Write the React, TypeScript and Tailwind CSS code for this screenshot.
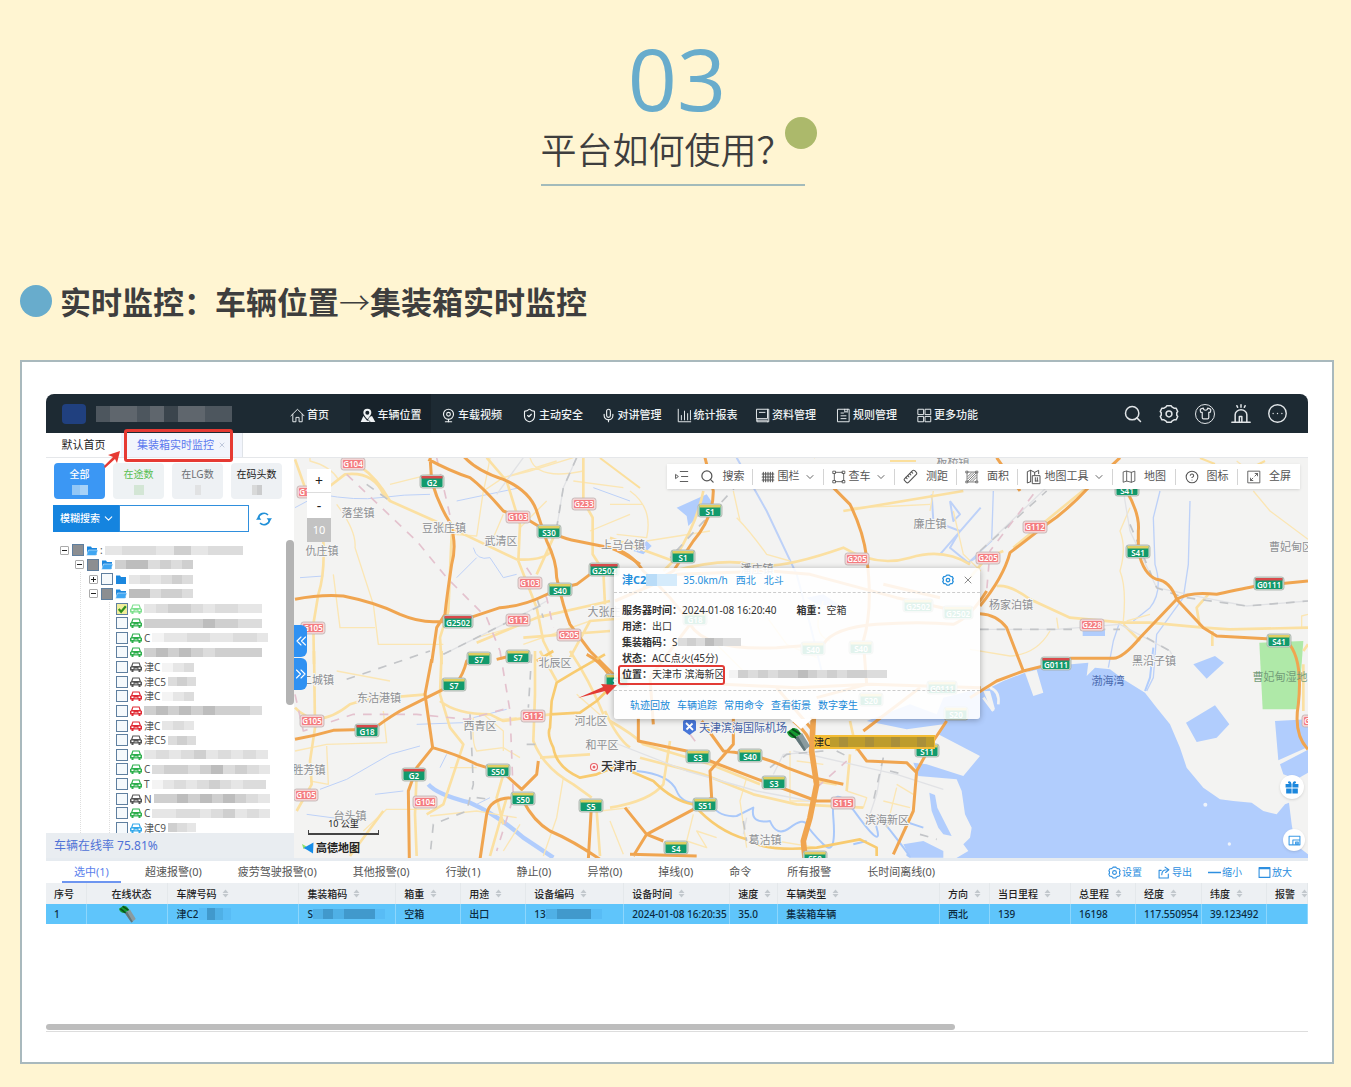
import React from "react";
import {
  ChevronDown,
  CircleEllipsis,
  CircleHelp,
  Mic,
  Ruler,
  Search,
  ShieldCheck,
  Shirt,
  Webcam,
  X,
} from "lucide-react";

const FONT = "font-['Noto_Sans','Noto_Sans_CJK_SC',sans-serif]";
const CJK = "font-['Noto_Sans_CJK_SC',sans-serif]";

/* ---------- icons ---------- */

function Icon({ d, size = 15, sw = 1.5, fill = "none" }: { d: string; size?: number; sw?: number; fill?: string }) {
  return (
    <svg width={size} height={size} viewBox="0 0 24 24" fill={fill} stroke="currentColor" strokeWidth={sw} strokeLinecap="round" strokeLinejoin="round" className="shrink-0">
      <path d={d} />
    </svg>
  );
}

const P = {
  home: "M1.5 12.5L12 2l10.500 10.500M4.500 10v12h5v-7h5v7h5V10",
  stats: "M2 2v20h20M7 12v7M12 5v14M17 9v10M21.500 4v15",
  book: "M3 2h17v15H3zM3 17v5h17M20 2h2v20h-2M7 7h9M3 19.500h17",
  rules: "M3 2h18v20H3zM8 8h4M8 12.500h8M8 17h8M14 2v5l2-1.500L18 7V2",
  more: "M2 2h8.500v8.500H2zM13.500 2H22v8.500h-8.500zM2 13.500h8.500V22H2zM13.500 13.500H22V22h-8.500z",
  gear: "M8.500 3.500l1-1.500h5l1 1.500 2.500 1.500h2.500l2 4-1.200 1.500v3L22.500 15l-2 4H18l-2.500 1.500-1 1.500h-5l-1-1.500L6 19H3.500l-2-4 1.200-1.500v-3L1.500 9l2-4H6zM12 8.500a3.500 3.500 0 1 0 0 7 3.500 3.500 0 0 0 0-7z",
  siren: "M1 22h22M5 22v-9a7 6 0 0 1 14 0V22M10 22v-7h3v7M12 1v3M7 2l1 2M17 2l-1 2",
  list: "M10 4h12M12 12h10M10 20h12M3 9l4 3-4 3z",
  grid: "M2 7h20M2 12h20M2 17h20M4 4v16M8 4v16M12 4v16M16 4v16M20 4v16",
  frame: "M2 2h4v4H2zM18 2h4v4h-4zM2 18h4v4H2zM18 18h4v4h-4zM6 4h12M6 20h12M4 6v12M20 6v12",
  area: "M2 2h3v3H2zM19 2h3v3h-3zM2 19h3v3H2zM19 19h3v3h-3zM5 3.500h14M5 20.500h14M3.500 5v14M20.500 5v14M5 11l6-6M5 15L15 5M5 19L19 5M9 19L19 9M13 19l6-6",
  tools: "M7 19l-5 2V4l5-2 6 3 6-3v5M7 2v17M13 5v4M10 10h11v12H10zM14 13v5M17 13v5M14 18h4",
  fold: "M2 4v17l6-2 8 2 6-2V2l-6 2-8-2zM8 2v17M16 4v17",
  full: "M2 2h20v20H2zM14 6h4v4M18 6l-4.500 4.500M6 14v4h4M6 18l4-4",
  export: "M6 8H2v14h17v-7M7 16c0-6 4-9 10-9M13 2l7 5-6 5",
  square: "M2 3h20v18H2zM2 5h20",
};

function PersonPin() {
  return (
    <svg width="16" height="16" viewBox="0 0 24 24" fill="currentColor" className="shrink-0">
      <path d="M11 1a6 6 0 0 1 6 6c0 3-3 6-6 10C8 13 5 10 5 7a6 6 0 0 1 6-6zm0 3a3 3 0 1 0 0 6 3 3 0 0 0 0-6z" fillRule="evenodd" />
      <path d="M5 12l-4 9h14l-3-3-1 1.500z" />
      <path d="M15 13l3-1 5 9h-7l-4-4z" />
    </svg>
  );
}

function GiftBox() {
  return (
    <svg width="14" height="14" viewBox="0 0 24 24" fill="#1b87dd">
      <path d="M1 7h10.300v6H1zM12.700 7H23v6H12.700zM2 14.500h9.300V23H2zM12.700 14.500H22V23h-9.300z" />
      <path d="M11 7C4 7 4 2 7 2s4 3 4 5zM13 7c7 0 7-5 4-5s-4 3-4 5z" />
    </svg>
  );
}

function Folder({ open }: { open: boolean }) {
  return (
    <svg width="12" height="11" viewBox="0 0 24 22" className="shrink-0">
      <path d="M2 3h8l2 3h10v14H2z" fill="#1b87de" />
      {open && <path d="M5 10h19l-4 11H1z" fill="#3fa6f2" stroke="#fff" strokeWidth="1" />}
    </svg>
  );
}

function Car({ color }: { color: string }) {
  return (
    <svg width="12" height="10" viewBox="0 0 24 20" className="shrink-0">
      <path fillRule="evenodd" d="M5 1h14l3 8 2 1v7h-3v3h-4v-3H7v3H3v-3H0v-7l2-1zm1.500 2L5 8h14l-1.500-5zM3 11v3h4v-3zm14 0v3h4v-3zM9 13h6v1.500H9z" fill={color} />
    </svg>
  );
}

function Truck({ width = 24, height = 26 }: { width?: number; height?: number }) {
  return (
    <svg width={width} height={height} viewBox="0 0 24 26">
      <path d="M9 11l7-5 8 13-6 5z" fill="#8a9b9f" />
      <path d="M9 11l3-2 8 14-2 1z" fill="#61767a" />
      <path d="M1 5l6-4c4 0 6 2 8 6l-7 4C5 11 2 9 1 5z" fill="#159a31" />
      <path d="M3 5l7 6M6 2l8 5" stroke="#0b4a1c" strokeWidth="2" />
    </svg>
  );
}

function Sorter() {
  return (
    <svg width="7" height="9" viewBox="0 0 14 18" className="shrink-0" fill="#c2c8cd">
      <path d="M7 1l6 7H1zM7 17l6-7H1z" />
    </svg>
  );
}

/* Obscured text shown as a run of grey blocks */
function Mosaic({ tones, className = "" }: { tones: string; className?: string }) {
  return (
    <span aria-hidden className={`flex overflow-hidden ${className}`}>
      {tones.split("").map((t, i) => (
        <span key={i} className={`h-full flex-1 ${TONE[t]}`} />
      ))}
    </span>
  );
}
const TONE: Record<string, string> = {
  "0": "bg-[#f4f4f4]",
  "1": "bg-[#e6e6e6]",
  "2": "bg-[#dcdcdc]",
  "3": "bg-[#cfcfcf]",
  "4": "bg-[#bdbdbd]",
  a: "bg-[#4d565e]",
  b: "bg-[#5f666d]",
  c: "bg-[#3b454d]",
  p: "bg-[#4fb0e6]",
  q: "bg-[#4199cc]",
  r: "bg-[#58bcf5]",
  s: "bg-[#b9dcf8]",
  t: "bg-[#d5ebfb]",
  g: "bg-[#c8e2c8]",
  y: "bg-[#bd9c2c]",
  z: "bg-[#a98f3a]",
};

/* ---------- top navigation ---------- */

const NAV: { label: string; icon: React.ReactNode; width: string; active?: boolean }[] = [
  { label: "首页", icon: <Icon d={P.home} />, width: "w-[81px]" },
  { label: "车辆位置", icon: <PersonPin />, width: "w-[81px]", active: true },
  { label: "车载视频", icon: <Webcam size={15} strokeWidth={1.800} />, width: "w-[81px]" },
  { label: "主动安全", icon: <ShieldCheck size={15} strokeWidth={1.800} />, width: "w-[81px]" },
  { label: "对讲管理", icon: <Mic size={15} strokeWidth={1.800} />, width: "w-[76px]" },
  { label: "统计报表", icon: <Icon d={P.stats} />, width: "w-[76px]" },
  { label: "资料管理", icon: <Icon d={P.book} />, width: "w-[81px]" },
  { label: "规则管理", icon: <Icon d={P.rules} />, width: "w-[81px]" },
  { label: "更多功能", icon: <Icon d={P.more} />, width: "w-[81px]" },
];

function TopBar() {
  return (
    <header className="flex h-[39px] items-stretch rounded-t-lg bg-[#1d2a33] text-[#eef2f4]">
      <div className="flex w-[223px] items-center pl-4">
        <span className="mr-2.5 h-5 w-6 rounded-sm bg-[#20407f]" />
        <Mosaic tones="abbabcbbaa" className="h-4 w-[136px]" />
      </div>
      <nav className="flex">
        {NAV.map((n) => (
          <a key={n.label} href="#" className={`flex items-center justify-center gap-0.5 pt-1 text-[11px] font-medium whitespace-nowrap ${n.width} ${n.active ? "bg-[#17222a]" : ""}`}>
            {n.icon}
            {n.label}
          </a>
        ))}
      </nav>
      <div className="mr-5 ml-auto flex items-center gap-4 text-[#e1e5e8]">
        <button aria-label="搜索"><Search size={20} strokeWidth={1.800} /></button>
        <button aria-label="设置"><Icon d={P.gear} size={20} sw={1.800} /></button>
        <button aria-label="皮肤" className="flex size-5 items-center justify-center rounded-full border border-current"><Shirt size={13} strokeWidth={2.200} /></button>
        <button aria-label="报警"><Icon d={P.siren} size={20} sw={1.800} /></button>
        <button aria-label="更多"><CircleEllipsis size={21} strokeWidth={1.600} /></button>
      </div>
    </header>
  );
}

function PageTabs() {
  return (
    <div className="relative flex h-6 bg-white text-[11px] text-[#222]">
      <button className="w-[75px]">默认首页</button>
      <button className="flex w-[122px] items-center justify-center gap-1 border-r border-[#dfe3e8] bg-[#f2f5fc] text-[#5b79ee]">
        集装箱实时监控
        <X size={8} className="text-[#a8b4cc]" />
      </button>
      <span className="absolute -top-1 left-[78px] z-20 h-[33px] w-[109px] rounded-[3px] border-[3px] border-[#e63a33]" />
      <svg className="absolute top-[17px] left-[57px] z-20" width="19" height="19" viewBox="0 0 19 19" fill="#e63a33">
        <path d="M1 16l9-9-5-2 12-4-3 12-2-4-10 9z" />
      </svg>
    </div>
  );
}

/* ---------- sidebar ---------- */

const CARDS = [
  { label: "全部", cls: "bg-[#3b97f4] text-white font-medium", tones: "st", w: "w-4" },
  { label: "在途数", cls: "bg-[#eef2f4] text-[#58bf52]", tones: "g", w: "w-2.5" },
  { label: "在LG数", cls: "bg-[#eef1f4] text-[#6b6f73]", tones: "2", w: "w-1.5" },
  { label: "在码头数", cls: "bg-[#eef1f4] text-[#222]", tones: "34", w: "w-2.5" },
];

type Row = { level: number; open?: boolean; state?: "part" | "on"; car?: string; text?: string; tones: string; w: string };
const GREEN = "#2daf4c";
const GREY = "#555";
const RED = "#e02b35";
const TREE: Row[] = [
  { level: 0, open: true, state: "part", text: ":", tones: "12213122", w: "w-[138px]" },
  { level: 1, open: true, state: "part", text: "", tones: "3442323", w: "w-[78px]" },
  { level: 2, open: false, text: "", tones: "121232", w: "w-[64px]" },
  { level: 2, open: true, state: "part", text: "", tones: "442332", w: "w-[64px]" },
  { level: 3, state: "on", car: "#7fe08f", tones: "1233212211", w: "w-[118px]" },
  { level: 3, car: GREEN, tones: "3333343322", w: "w-[118px]" },
  { level: 3, car: GREEN, text: "C", tones: "0112211221", w: "w-[116px]" },
  { level: 3, car: GREEN, tones: "3434323333", w: "w-[118px]" },
  { level: 3, car: GREY, text: "津C", tones: "012", w: "w-[32px]" },
  { level: 3, car: GREY, text: "津C5", tones: "232", w: "w-[28px]" },
  { level: 3, car: RED, text: "津C", tones: "012", w: "w-[32px]" },
  { level: 3, car: RED, tones: "3434343332", w: "w-[118px]" },
  { level: 3, car: RED, text: "津C", tones: "121", w: "w-[32px]" },
  { level: 3, car: GREY, text: "津C5", tones: "232", w: "w-[28px]" },
  { level: 3, car: GREEN, tones: "1212312121", w: "w-[124px]" },
  { level: 3, car: GREEN, text: "C", tones: "2332342321", w: "w-[118px]" },
  { level: 3, car: GREEN, text: "T", tones: "0121232122", w: "w-[114px]" },
  { level: 3, car: GREY, text: "N", tones: "3343434321", w: "w-[116px]" },
  { level: 3, car: GREEN, text: "C", tones: "1122123121", w: "w-[118px]" },
  { level: 3, car: "#35a9ea", text: "津C9", tones: "321", w: "w-[28px]" },
];
const INDENT = ["pl-[14px]", "pl-[29px]", "pl-[43px]", "pl-[70px]"];

function TreeRow({ row }: { row: Row }) {
  return (
    <li className={`flex h-3.5 items-center gap-0.5 text-[10px] leading-3.5 text-[#555] ${INDENT[row.level]}`}>
      {row.level < 3 && (
        <button aria-label={row.open ? "收起" : "展开"} className="mr-px flex size-[9px] items-center justify-center rounded-[1px] border border-[#aaa] bg-white">
          <svg width="5" height="5" viewBox="0 0 5 5" stroke="#222" strokeWidth="1"><path d={row.open ? "M0 2.500h5" : "M0 2.500h5M2.500 0v5"} /></svg>
        </button>
      )}
      <span className="relative flex size-3 shrink-0">
        <input
          type="checkbox"
          aria-label={row.text || "车辆"}
          defaultChecked={row.state === "on"}
          className={`size-3 appearance-none border border-[#5f7f9f] ${row.state === "part" ? "bg-[#8c8e91]" : row.state === "on" ? "bg-[#f1ee9b]" : "bg-[#f5f9fc]"}`}
        />
        {row.state === "on" && (
          <svg className="pointer-events-none absolute inset-0" viewBox="0 0 11 11" fill="none" stroke="#2f8f1f" strokeWidth="2"><path d="M2.500 5.500l2.200 2.500L9 3" /></svg>
        )}
      </span>
      <span className="flex">{row.car ? <Car color={row.car} /> : <Folder open={!!row.open} />}</span>
      {row.text}
      <Mosaic tones={row.tones} className={`h-[9px] ${row.w}`} />
    </li>
  );
}

function Sidebar() {
  return (
    <aside className="flex h-[400px] w-[248px] shrink-0 flex-col bg-white">
      <div className="flex gap-2 pt-[5px] pl-2">
        {CARDS.map((c) => (
          <button key={c.label} className={`flex h-9 w-[51px] flex-col items-center gap-1 rounded pt-1 text-[10px] leading-3.5 whitespace-nowrap ${c.cls}`}>
            {c.label}
            <Mosaic tones={c.tones} className={`h-2.5 ${c.w} opacity-70`} />
          </button>
        ))}
      </div>
      <div className="mt-1.5 flex h-[27px] items-center pl-[7px]">
        <label className="relative flex h-full w-[66px] items-center bg-[#1584df] text-white">
          <select aria-label="搜索方式" className="h-full w-full appearance-none pl-[7px] text-[10px] font-medium outline-none">
            <option>模糊搜索</option>
          </select>
          <ChevronDown size={13} className="pointer-events-none absolute right-1" />
        </label>
        <input aria-label="搜索内容" className="h-full w-[130px] border border-[#2f8fdd] bg-white px-1 text-[10px] outline-none" />
        <button aria-label="刷新" className="ml-[7px]">
          <svg width="16" height="16" viewBox="0 0 24 24" fill="none" stroke="#2190d8" strokeWidth="2.500">
            <path d="M3.500 11A8.500 8.500 0 0 1 18 6M20.500 13A8.500 8.500 0 0 1 6 18" />
            <path d="M16 11h8l-4 5zM0 13h8L4 8z" fill="#2190d8" stroke="none" />
          </svg>
        </button>
      </div>
      <div className="relative min-h-0 flex-1 overflow-hidden pt-[11px]">
        <span className="absolute top-10 bottom-0 left-[34px] border-l border-dotted border-[#dedede]" />
        <span className="absolute top-[70px] bottom-0 left-[63px] border-l border-dotted border-[#dedede]" />
        <ul className="relative flex h-[292px] flex-col justify-between">
          {TREE.map((r, i) => <TreeRow key={i} row={r} />)}
        </ul>
        <span className="absolute top-2 right-0 h-[165px] w-2 rounded-full bg-[#b3b3b3]" />
      </div>
      <p className="flex h-[25px] items-center bg-[#e9edf1] pl-2 text-[12px] text-[#4f71d6]">车辆在线率 75.81%</p>
    </aside>
  );
}

/* ---------- map drawing ---------- */

/* A map tile drawn at three units per map pixel */
function Tile({ x, y, children }: { x: number; y: number; children: React.ReactNode }) {
  return <g transform={`translate(${x} ${y}) scale(0.33333)`}>{children}</g>;
}

const PLACES: [number, number, string][] = [
  [358, 512, "落垡镇"], [444, 527, "豆张庄镇"], [501, 540, "武清区"], [623, 544, "上马台镇"], [322, 550, "仇庄镇"],
  [604, 611, "大张庄"], [555, 662, "北辰区"], [379, 697, "东沽港镇"], [312, 679, "堂二城镇"], [480, 725, "西青区"],
  [591, 720, "河北区"], [602, 744, "和平区"], [309, 769, "胜芳镇"], [350, 815, "台头镇"], [930, 523, "廉庄镇"],
  [1011, 604, "杨家泊镇"], [1154, 660, "黑沿子镇"], [1291, 546, "曹妃甸区"], [887, 819, "滨海新区"], [765, 839, "葛沽镇"],
  [953, 461, "板桥镇"], [757, 568, "潘庄镇"],
];

const RED_SHIELDS: [number, number, string][] = [
  [353, 463, "G104"], [309, 491, "G105"], [584, 503, "G233"], [518, 516, "G103"], [530, 582, "G103"], [518, 619, "G112"],
  [569, 634, "G205"], [313, 627, "G105"], [312, 720, "G105"], [306, 794, "G105"], [533, 715, "G112"], [425, 801, "G104"],
  [857, 558, "G205"], [988, 557, "G205"], [1035, 526, "G112"], [1092, 624, "G228"], [843, 802, "S115"], [1314, 720, "G228"],
];

const GREEN_SHIELDS: [number, number, string, boolean?][] = [
  [432, 480, "G2", true], [549, 530, "S30"], [560, 588, "S40"], [604, 568, "G2502", true], [458, 620, "G2502", true],
  [518, 655, "S7"], [479, 657, "S7"], [454, 683, "S7"], [367, 729, "G18", true], [414, 773, "G2", true],
  [498, 769, "S50"], [523, 797, "S50"], [591, 804, "S5"], [710, 509, "S1"], [683, 555, "S1"],
  [750, 754, "S40"], [698, 755, "S3"], [774, 781, "S3"], [705, 803, "S51"], [676, 846, "S4"],
  [927, 749, "S11"], [1138, 550, "S41"], [1269, 582, "G0111", true], [1279, 639, "S41"], [1056, 662, "G0111", true],
  [617, 679, "S6"], [1127, 488, "S41"], [815, 856, "S50"], [918, 604, "G2502"], [958, 611, "G2502"],
  [813, 647, "S40"], [861, 646, "S40"], [695, 617, "G18"], [942, 686, "G0111"], [871, 698, "S20"], [956, 712, "S20"],
];

function Shields() {
  return (
    <g fontSize="8" fontWeight="600" textAnchor="middle" fill="#fff">
      {RED_SHIELDS.map(([x, y, t], i) => (
        <g key={i}>
          <rect x={x - 12} y={y - 6} width="24" height="12" rx="2.500" fill="#f5d4d4" stroke="#bdb2b2" strokeWidth="0.800" />
          <rect x={x - 10} y={y - 4} width="20" height="8" rx="1" fill="#f47c80" />
          <text x={x} y={y + 3}>{t}</text>
        </g>
      ))}
      {GREEN_SHIELDS.map(([x, y, t, national], i) => {
        const h = t.length > 3 ? 15 : 12;
        return (
          <g key={i}>
            <rect x={x - h} y={y - 6} width={h * 2} height="13" rx="2.500" fill="#cfe0d4" stroke="#a3aaa5" strokeWidth="0.800" />
            <rect x={x - h + 1.500} y={y - 5} width={h * 2 - 3} height="11" rx="1" fill="#129a6c" />
            <rect x={x - h + 1.500} y={y - 5} width={h * 2 - 3} height="2.500" fill={national ? "#d8494b" : "#e0cd62"} />
            <text x={x} y={y + 5}>{t}</text>
          </g>
        );
      })}
    </g>
  );
}

function MapDrawing() {
  const orange = { stroke: "#f0a550", strokeWidth: 9 };
  const gold = { stroke: "#f8cb70", strokeWidth: 8 };
  const yellow = { stroke: "#fbe0a2", strokeWidth: 8 };
  const thin = { stroke: "#fbe6b4", strokeWidth: 4 };
  const stream = { stroke: "#bdd1f8", strokeWidth: 3 };
  const rail = { stroke: "#c3c5c8", strokeWidth: 5, strokeDasharray: "26 24" };
  const railBed = { stroke: "#e1e2e5", strokeWidth: 4 };
  const pink = { stroke: "#e4c2ce", strokeWidth: 5, strokeDasharray: "26 24" };
  return (
    <svg className="absolute inset-0 size-full" viewBox="294 457 1014 400" preserveAspectRatio="xMinYMin slice" role="img" aria-label="地图">
      <rect x="0" y="0" width="3000" height="3000" fill="#f3f3f2" />
      <g fill="#b1cdfd">
        <Tile x={970} y={490}>
          <path d="M30 605L100 570L165 545L210 528L355 515L350 555L375 530L420 535L460 565L525 605L560 650L600 700L630 770L650 830L700 890L750 925L790 930L845 935L880 960L920 970L945 940L957 935L965 1000L975 1060L1014 1090V1130H-90L-5 1080L-20 1060L0 1040L5 1010L-15 970L-25 900L-40 865L-155 855L-170 815L-130 820L-20 855L30 795L-95 730L-80 700L-190 715L-310 690L-180 640L-100 670L-80 620L0 600Z" />
          <path d="M338 418L405 415V435H338ZM670 520L735 495L762 515L735 540L710 563ZM648 695L735 643L778 700L740 740L680 753ZM915 690L1014 685V768L925 808ZM930 820L1014 776V845L980 865L940 850Z" />
          <path d="M165 545L190 615L220 605L200 536ZM40 600L65 660L75 655L60 600Z" fill="#f3f3f2" />
          <path d="M-122 905L-105 912L-98 950L-55 1035L-80 1030L-95 1010L-115 960ZM-200 1060L-140 1050L-80 1080L-80 1100H-180Z" />
          <path d="M60 590Q90 600 85 640M40 620L70 660" stroke="#f3f3f2" strokeWidth="8" fill="none" />
          <circle cx="706" cy="941" r="6" fill="#eef3fb" /><circle cx="778" cy="1059" r="5" fill="#eef3fb" />
          <path d="M868 455L1000 450L985 655L878 655Z" fill="#afe9a8" />
        </Tile>
        <Tile x={610} y={490}>
          <path d="M200 50L290 10L310 40L265 75L235 105L230 75ZM70 180L110 150L125 165L100 190ZM590 320L640 310L700 350L620 340Z" />
        </Tile>
      </g>
      <g fill="none" strokeLinecap="butt" strokeLinejoin="round">
        <Tile x={290} y={450}>
          <path d="M15 170L90 130Q200 150 270 140T420 130M500 150L690 110M910 110L1020 150M550 290Q560 330 600 320L640 380L680 370M500 380L560 320M30 380L100 375" {...stream} />
          <path d="M60 20V30Q120 45 145 85M140 160Q200 240 195 290L250 460L265 580L460 580M130 370L150 530L255 530M300 100L420 70M600 20Q590 80 580 120L560 255L490 250M580 120L640 80L800 30M640 80L720 60L850 20M720 20Q740 90 880 60M850 90L1000 110M640 190L610 260M770 150L690 230M900 240L1020 190M560 560L700 520M700 580L900 510" {...thin} />
          <path d="M15 25L45 110M120 105L165 70Q250 60 280 130L300 150L480 230L680 325Q760 330 785 300M215 50Q260 80 300 150M100 270Q105 370 85 430L70 520L72 640M590 20L650 90L690 220L685 330L740 470L760 570L790 630M880 20V150L908 200V310L940 360L945 460M740 370L790 260M740 500L960 450M485 250L475 480L450 560L455 640M700 560L960 540M560 575L740 500M840 620L900 510L1020 500" {...yellow} />
          <path d="M700 20L620 130M860 20L820 110L800 230M460 610L700 490L770 450" {...railBed} />
          <path d="M860 20L820 110L800 230M460 610L700 490L760 460M740 440L760 500M230 100L300 150" {...rail} />
          <path d="M440 20L485 215M170 70L380 270L470 380L590 500L630 600M710 350L770 440L790 530" {...pink} />
          <path d="M420 15L425 90Q445 160 480 215Q502 280 485 340Q470 440 465 490L440 530L425 635M415 25Q480 60 540 80Q580 110 640 180L720 210Q800 260 860 270L960 290Q1000 305 1050 340M520 15Q560 60 640 85Q720 120 740 180L770 270Q800 330 800 380Q820 470 840 520L900 600L990 690M15 445Q90 430 160 435Q260 455 330 490Q390 515 440 512H500M540 500L630 470Q700 465 760 435L810 412L860 400L920 355L980 345" {...orange} />
        </Tile>
        <Tile x={290} y={650}>
          <path d="M415 400Q440 430 540 455Q620 490 700 560L790 620" stroke="#b1cdfd" strokeWidth="13" />
          <path d="M90 415L170 385L300 310L390 285M450 350L470 310M550 200L650 175M380 220L520 215M560 460L600 440M50 490L200 510M255 430L340 420" {...stream} />
          <path d="M15 300L110 280L290 275L280 180M110 285L115 400L60 390M140 60L300 90M220 540L290 475H420M420 495L560 480L680 500M550 200Q545 280 560 300L640 290L690 320M580 190L640 240V300M520 220L680 200M480 350H560M690 520L640 600M820 380L800 500L760 615M930 480L1020 470M860 130L940 200" {...thin} />
          <path d="M72 0L75 230L60 330L65 400L20 480M15 170Q80 240 180 160L230 145L410 130M455 0L450 130L480 230L520 280L490 370L460 460L410 490M450 150Q500 190 600 190L640 210L780 190M380 370L375 490L380 615M735 0L735 130L730 270Q760 350 850 400L905 440M640 370L620 440L640 520M750 0L800 90M840 0Q900 90 940 190M920 480L930 615M945 180Q980 260 1020 290M750 320L900 310M600 615L650 440M280 480L180 615" {...yellow} />
          <path d="M170 85L420 0M540 190L545 290L550 400L530 480L430 520L420 615M725 10L715 170M560 440L600 445M710 280H750" {...rail} />
          <path d="M15 130L40 240L190 190H380L530 205L660 170M630 0L660 180L670 440L620 600" {...pink} />
          <path d="M945 10L850 65L800 95L785 150L780 230Q770 250 790 290Q800 350 870 380L920 370L1020 330M780 190L870 185L920 150L970 100M790 0L740 30" {...gold} />
          <path d="M425 25L405 130L428 290L380 350L355 420L358 625M620 25L690 8M560 20L530 30Q520 70 500 95L410 140L330 180Q280 210 250 235L130 238Q70 255 15 265M428 290Q500 310 560 340L640 365L695 415L740 370L745 330M695 430L670 440Q600 440 590 490L570 625M700 450Q730 510 780 540Q850 570 930 625M905 450L895 625M890 10Q930 30 960 75" {...orange} />
        </Tile>
        <Tile x={610} y={490}>
          <path d="M380 -100L470 60L560 250L600 400L640 560M965 10L970 90L1050 120L1020 170L1075 215L1112 190M1020 30L1050 70L1030 90L1020 30M990 190L1112 50" {...stream} strokeWidth="6" />
          <path d="M0 40H100M60 0Q130 50 110 140L20 130M110 150L300 120M380 80Q420 120 470 190L540 210M730 50L860 45L960 40M370 0L390 90M970 0L960 60M1030 60L1060 190L1112 240M640 330Q600 430 660 450M300 440L420 560M450 350L530 460L620 500" {...thin} />
          <path d="M195 200Q260 100 280 0M190 240Q340 200 420 220T700 170Q800 230 900 200T1080 220M0 140L190 210L160 240M700 60L1060 0" {...yellow} />
          <path d="M420 -60L310 60L180 200" {...rail} />
          <path d="M285 -100L310 0Q310 80 250 150L190 240L100 290M670 -10L720 40Q760 120 770 200Q790 350 760 450L770 580L620 620M0 170Q60 180 100 240Q190 320 240 400T500 470L640 460Q670 410 800 400T1030 400Q1080 380 1130 300M340 580L560 590L780 580L1112 590M15 330L200 250L480 240L600 250L860 320L1040 360M820 280L990 320M240 400L120 560L130 700M500 590L610 720M930 590L760 720" {...orange} />
        </Tile>
        <Tile x={610} y={700}>
          <path d="M80 210Q180 220 200 270T300 300Q320 350 380 345L430 320Q420 370 480 360Q500 410 540 380T590 370T640 430T670 350T740 340T800 380T850 400T890 460" stroke="#a9c8fa" strokeWidth="6" />
          <path d="M730 430L770 420M880 360L940 380" stroke="#a9c8fa" strokeWidth="6" />
          <path d="M410 230L390 300L410 440M540 150V300M560 180L640 190M760 320L770 290L710 270M820 300L900 320M860 260L830 380M860 250L910 280M250 340L230 420L290 440L260 390L320 410M0 360L40 460M540 300H620M500 420L620 440" {...thin} />
          <path d="M0 60Q70 100 100 130L300 190L450 250M180 120L160 250Q120 300 0 320M90 170L280 220L430 280L560 310L760 320M720 160L710 270M720 60L740 150M610 240L680 250" {...yellow} />
          <path d="M60 210L130 240Q190 300 250 310Q320 390 410 415M440 430Q500 450 620 440L750 415L800 440V465" {...gold} />
          <path d="M0 120L230 210L440 270L600 300M820 170L800 280L780 340M550 150L860 220L1000 265M410 350L400 400M490 220L520 160L640 150" {...railBed} />
          <path d="M480 200L530 160L640 150M820 170L790 300M400 360L410 420M680 150L720 170M840 210L880 220M930 400L980 415" {...rail} />
          <path d="M240 100L270 140M620 260L710 180" {...pink} />
          <path d="M85 50V120L230 150L300 180L430 230L540 270L620 300H700M275 60L340 150Q450 160 530 200L610 230L700 250M370 50L370 130L300 210L305 290L260 320L110 400L70 465M45 320L110 400L160 420M740 140L770 180L890 185L920 215M1010 60L970 120L920 210L910 330L850 460M60 460L260 465M550 60Q600 100 605 140" {...orange} />
          <path d="M610 50L605 150L620 250L600 350L580 420L585 470" stroke="#f0a550" strokeWidth="17" />
        </Tile>
        <Tile x={970} y={490}>
          <path d="M70 0L65 150L0 210M570 0L550 80L555 220Q580 300 540 350L490 390M660 30L655 220L640 320L560 430L550 560L530 600M450 390L430 450L415 530" {...stream} strokeWidth="4" />
          <path d="M550 470L540 560L525 600" stroke="#b1cdfd" strokeWidth="6" />
          <path d="M480 50L450 120Q470 170 450 240Q470 290 460 390M240 420Q200 490 120 495L0 475M260 380L265 415M850 0L900 60L1014 145M1014 370L995 375V410M540 370L470 390M800 -90L900 -10" {...thin} />
          <path d="M130 170L350 -10M80 285Q120 280 180 325L300 380L460 395L540 395L700 410L780 415L1014 410M460 400L510 450M715 310L680 350L690 410M727 420V465M1000 480L1014 460M1000 520V660M100 180L50 200L0 260" {...yellow} />
          <path d="M30 180L250 -30M460 0L480 120L560 290L700 320L830 345L1014 330M30 415H260L450 400L600 480L610 500" {...railBed} />
          <path d="M30 180L230 0M480 100L560 290L640 320M650 320L830 345L1014 330M30 415H450M530 440L600 480" {...rail} />
          <path d="M190 10L60 180L50 300" {...pink} />
          <path d="M450 -100L355 -10Q290 60 230 100L120 185Q100 260 30 345M470 0Q510 70 505 120V180Q520 250 560 265Q600 270 620 325L700 410L740 435L890 443L950 450Q1000 500 985 640Q970 730 1014 775M30 368Q80 370 110 410L160 540M0 620L80 570L160 540L260 515L300 502H430Q460 500 510 440L620 325Q660 300 740 310Q830 290 860 285L1014 270M80 -100L150 0" {...orange} />
        </Tile>
        <path d="M815 457l-5-10M890 460h26M600 457l40 30M1200 457l15 6M1245 470l20-10" stroke="#fbdf9c" strokeWidth="2" />
      </g>
      <g fontSize="11" textAnchor="middle" fill="#8d8f93" stroke="#f6f6f5" strokeWidth="2" paintOrder="stroke">
        {PLACES.map(([x, y, t]) => <text key={t} x={x} y={y + 4}>{t}</text>)}
        <text x="619" y="770" fontSize="12" fontWeight="500" fill="#333">天津市</text>
        <text x="743" y="731" fill="#4563a8">天津滨海国际机场</text>
        <text x="1108" y="684" fill="#4a6aae" stroke="none">渤海湾</text>
        <text x="1280" y="680" fill="#739c79" stroke="none">曹妃甸湿地</text>
      </g>
      <circle cx="594" cy="766" r="3.500" fill="#fff" stroke="#e8646a" strokeWidth="1.200" />
      <circle cx="594" cy="766" r="1.500" fill="#e8646a" />
      <path d="M685 719h9q2 0 2 2v8q0 1-1 1l-5.500 4-5.500-4q-1 0-1-1v-8q0-2 2-2z" fill="#4776d8" />
      <path d="M686 722l7 7M692.500 722.500l-6 6" stroke="#fff" strokeWidth="1.800" />
      <Shields />
    </svg>
  );
}

/* ---------- map overlays ---------- */

const TOOLS: { label: string; icon: React.ReactNode; width: string; menu?: boolean }[] = [
  { label: "搜索", icon: <Search size={15} strokeWidth={2} />, width: "w-[61px]" },
  { label: "围栏", icon: <Icon d={P.grid} size={14} sw={1.800} />, width: "w-[71px]", menu: true },
  { label: "查车", icon: <Icon d={P.frame} size={14} />, width: "w-[71px]", menu: true },
  { label: "测距", icon: <Ruler size={15} strokeWidth={1.800} className="-rotate-90" />, width: "w-[62px]" },
  { label: "面积", icon: <Icon d={P.area} size={14} sw={1.300} />, width: "w-[61px]" },
  { label: "地图工具", icon: <Icon d={P.tools} size={16} />, width: "w-[95px]", menu: true },
  { label: "地图", icon: <Icon d={P.fold} size={14} />, width: "w-[63px]" },
  { label: "图标", icon: <CircleHelp size={14} strokeWidth={1.800} />, width: "w-[62px]" },
  { label: "全屏", icon: <Icon d={P.full} size={14} />, width: "w-[62px]" },
];

function Toolbar() {
  return (
    <div className="absolute top-[6px] right-2 flex h-[25px] items-center bg-white pl-1 text-[11px] text-[#555] shadow">
      <button aria-label="列表" className="flex w-[21px] justify-center"><Icon d={P.list} size={15} /></button>
      {TOOLS.map((t, i) => (
        <button key={t.label} className={`flex h-4 items-center justify-center whitespace-nowrap ${t.menu ? "gap-[3px]" : "gap-2"} ${t.width} ${i < TOOLS.length - 1 ? "border-r border-[#d4d4d4]" : ""}`}>
          {t.icon}
          {t.label}
          {t.menu && <ChevronDown size={12} strokeWidth={1.800} className="ml-px" />}
        </button>
      ))}
    </div>
  );
}

function Field({ label, children }: { label: string; children: React.ReactNode }) {
  return (
    <div className="flex items-center">
      <dt className="font-semibold">{label}：</dt>
      <dd className="flex items-center">{children}</dd>
    </div>
  );
}

function VehiclePopup() {
  return (
    <section className="absolute top-[110px] left-[320px] w-[366px] rounded-[3px] bg-white/88 text-[10px] text-[#333] shadow-[0_1px_6px_rgba(0,0,0,0.3)]">
      <header className="flex h-[25px] items-center border-b border-dashed border-[#ccc] pr-1.5 pl-2 text-[#258fdc]">
        <strong className="text-[11px] font-bold">津C2</strong>
        <Mosaic tones="stt" className="h-3 w-[31px]" />
        <span className="ml-1.5">35.0km/h</span>
        <span className="ml-2">西北</span>
        <span className="ml-2">北斗</span>
        <button aria-label="设置" className="ml-auto"><Icon d={P.gear} size={12} sw={2.500} /></button>
        <button aria-label="关闭" className="ml-2 text-[#8b8b8b]"><X size={12} strokeWidth={2} /></button>
      </header>
      <dl className="flex h-[97px] flex-col pt-[9px] pl-2 leading-4">
        <div className="flex gap-5">
          <Field label="服务器时间">2024-01-08 16:20:40</Field>
          <Field label="箱重">空箱</Field>
        </div>
        <Field label="用途">出口</Field>
        <Field label="集装箱码">S<Mosaic tones="2324322" className="h-2 w-16" /></Field>
        <Field label="状态">ACC点火(45分)</Field>
        <Field label="位置">天津市 滨海新区<Mosaic tones="0323233432323322" className="ml-1 h-2 w-[158px]" /></Field>
      </dl>
      <span className="absolute top-[97px] left-1 h-5 w-[107px] rounded-[3px] border-2 border-[#e23b35]" />
      <footer className="flex h-[29px] items-center gap-[7px] border-t border-dashed border-[#ccc] pl-4 text-[#2089d8]">
        {["轨迹回放", "车辆追踪", "常用命令", "查看街景", "数字孪生"].map((t) => <a key={t} href="#">{t}</a>)}
      </footer>
      <svg className="absolute top-full left-[176px]" width="22" height="10" viewBox="0 0 22 10"><path d="M0 0h22L11 10z" fill="#fff" /></svg>
      <svg className="absolute top-[115px] -left-9" width="39" height="16" viewBox="0 0 39 16" fill="#e23b35"><path d="M0 15l25-11-2-3 16 1-10 10-2-4z" /></svg>
    </section>
  );
}

function MapPanel() {
  return (
    <main className="relative min-w-0 flex-1 overflow-hidden">
      <MapDrawing />
      <Toolbar />
      <div className="absolute top-[11px] left-[13px] flex w-6 flex-col bg-white text-[14px] text-[#222]">
        <button aria-label="放大" className="h-6 border-b border-[#ddd] leading-6">+</button>
        <button aria-label="缩小" className="h-[25px] leading-6">-</button>
        <span className="h-6 bg-[#c3c3c3] text-center text-[11px] leading-6 text-white">10</span>
      </div>
      <div className="absolute top-[167px] left-0 flex w-[13px] flex-col gap-px text-white">
        <button aria-label="收起" className="flex h-8 items-center justify-center rounded-r-md bg-[#2f91f2]"><Icon d="M12 4l-8 8 8 8M21 4l-8 8 8 8" size={12} sw={2.200} /></button>
        <button aria-label="展开" className="flex h-8 items-center justify-center rounded-r-md bg-[#2f91f2]"><Icon d="M3 4l8 8-8 8M12 4l8 8-8 8" size={12} sw={2.200} /></button>
      </div>
      <VehiclePopup />
      <div className="absolute top-[269px] left-[492px] flex items-start">
        <Truck />
        <span className="mt-2 ml-1 flex h-3.5 items-center bg-[#f3bc35] pr-px text-[10px] text-[#222]">津C<Mosaic tones="yzyyzyyzyyzy" className="h-2.5 w-[104px]" /></span>
      </div>
      <div className="absolute bottom-[2px] left-2 text-[#222]">
        <div className="ml-1.5 w-[71px] text-center text-[9px] leading-3">
          10 公里
          <div className="h-[5px] border-x border-b-2 border-[#444]" />
        </div>
        <div className="mt-[5px] flex items-center gap-0.5 text-[11px] leading-4 font-bold">
          <svg width="12" height="12" viewBox="0 0 24 24"><path d="M0 4l9 5-6 5z" fill="#8de06a" /><path d="M23 1L3 12l6 3 13 8z" fill="#168de8" /></svg>
          高德地图
        </div>
      </div>
      <button aria-label="礼品" className="absolute right-1 bottom-[59px] flex size-6 items-center justify-center rounded-full bg-white shadow"><GiftBox /></button>
      <button aria-label="小地图" className="absolute right-[3px] bottom-[7px] flex size-[22px] items-center justify-center rounded-full bg-white text-[#3c9be6] shadow"><Icon d="M2 4h20v16H2zM9 20v-9h13M14 15h5v3h-5z" size={13} sw={2} /></button>
    </main>
  );
}

/* ---------- bottom table ---------- */

const STATUS_TABS = ["选中(1)", "超速报警(0)", "疲劳驾驶报警(0)", "其他报警(0)", "行驶(1)", "静止(0)", "异常(0)", "掉线(0)", "命令", "所有报警", "长时间离线(0)"];

const COLUMNS: { label: string; width: number; value: React.ReactNode; sort?: boolean }[] = [
  { label: "序号", width: 41, value: "1", sort: false },
  { label: "在线状态", width: 81, value: <span className="flex justify-center pr-2"><Truck width={20} height={19} /></span>, sort: false },
  { label: "车牌号码", width: 131, value: <span className="flex items-center">津C2<Mosaic tones="rqpr" className="h-3 w-8" /></span> },
  { label: "集装箱码", width: 97, value: <span className="flex items-center">S<Mosaic tones="pqpqqqr" className="h-2.5 w-[72px]" /></span> },
  { label: "箱重", width: 65, value: "空箱" },
  { label: "用途", width: 65, value: "出口" },
  { label: "设备编码", width: 98, value: <span className="flex items-center">13<Mosaic tones="pqqqr" className="h-2.5 w-14" /></span> },
  { label: "设备时间", width: 106, value: "2024-01-08 16:20:35" },
  { label: "速度", width: 48, value: "35.0" },
  { label: "车辆类型", width: 162, value: "集装箱车辆" },
  { label: "方向", width: 50, value: "西北" },
  { label: "当日里程", width: 81, value: "139" },
  { label: "总里程", width: 65, value: "16198" },
  { label: "经度", width: 66, value: "117.550954" },
  { label: "纬度", width: 65, value: "39.123492" },
  { label: "报警", width: 41, value: "" },
];
const TOTAL = COLUMNS.reduce((s, c) => s + c.width, 0);

function StatusPanel() {
  return (
    <section className="border-t-[3px] border-[#e6ebf0] bg-white">
      <div className="flex h-[22px] justify-between pr-4 pl-7 text-[11px] whitespace-nowrap text-[#555]">
        <div className="flex gap-9">
          {STATUS_TABS.map((t, i) => (
            <button key={t} className={i === 0 ? "-mx-3 border-b-2 border-[#6d95f0] px-3 pt-0.5 text-[#5a80ec]" : ""}>{t}</button>
          ))}
        </div>
        <div className="flex items-center gap-4 text-[10px] text-[#2e8fe0]">
          <button className="flex items-center gap-px"><Icon d={P.gear} size={13} sw={2} />设置</button>
          <button className="flex items-center gap-px"><Icon d={P.export} size={13} sw={2} />导出</button>
          <button className="flex items-center gap-px"><Icon d="M1 12h22" size={13} sw={3} />缩小</button>
          <button className="flex items-center gap-px"><Icon d={P.square} size={13} sw={2} />放大</button>
        </div>
      </div>
      <div className="h-[141px] overflow-hidden">
        <table className="w-full table-fixed border-collapse text-[10px] leading-4 whitespace-nowrap text-[#222]">
          <colgroup>
            {COLUMNS.map((c) => <col key={c.label} style={{ width: `${(c.width / TOTAL) * 100}%` }} />)}
          </colgroup>
          <thead>
            <tr className="h-[21px] bg-[#edf0f3]">
              {COLUMNS.map((c, i) => (
                <th key={c.label} className="overflow-hidden border-r border-[#e4e8eb] p-0 pl-2 font-medium">
                  <span className={`flex items-center gap-1.5 ${i === 1 ? "justify-center" : ""}`}>{c.label}{c.sort !== false && <Sorter />}</span>
                </th>
              ))}
            </tr>
          </thead>
          <tbody>
            <tr className="h-5 bg-[#5fc5fb] text-[#0c2b40]">
              {COLUMNS.map((c) => <td key={c.label} className="border-r border-[#8dd6fc] p-0 pl-2 font-medium">{c.value}</td>)}
            </tr>
          </tbody>
        </table>
      </div>
      <div className="h-[7px]"><div className="h-1.5 w-[72%] rounded-full bg-[#bdbdbd]" /></div>
    </section>
  );
}

export default function App() {
  return (
    <div lang="zh-CN" className={`min-h-screen bg-[#fff5d2] pt-[38px] pr-[17px] pb-6 pl-5 ${FONT}`}>
      <div className="flex flex-col items-center">
        <span className="h-[87px] font-['Open_Sans','Noto_Sans',sans-serif] text-[86px] leading-[80px] text-[#68accc]">03</span>
        <h1 className={`relative mr-[9px] h-[61px] w-[264px] border-b-2 border-[#a3bbbb] text-[36px] leading-[46px] font-[350] whitespace-nowrap text-[#3e3e3e] ${CJK}`}>
          平台如何使用？
          <span className="absolute -top-2 right-[-12px] size-8 rounded-full bg-[#acb96b]" />
        </h1>
      </div>
      <h2 className={`mt-[92px] flex items-center gap-2 text-[31px] leading-[46px] font-bold text-[#3e3e3e] ${CJK}`}>
        <span className="size-8 shrink-0 rounded-full bg-[#68accc]" />
        <span>实时监控：车辆位置<span className="font-light">→</span>集装箱实时监控</span>
      </h2>
      <div className="mt-9 border-2 border-[#a9b9bd] bg-white px-6 pt-8 pb-[30px]">
        <div className="border-b border-[#ddd]">
          <TopBar />
          <PageTabs />
          <div className="flex border-t border-[#e5e7ea]">
            <Sidebar />
            <MapPanel />
          </div>
          <StatusPanel />
        </div>
      </div>
    </div>
  );
}
